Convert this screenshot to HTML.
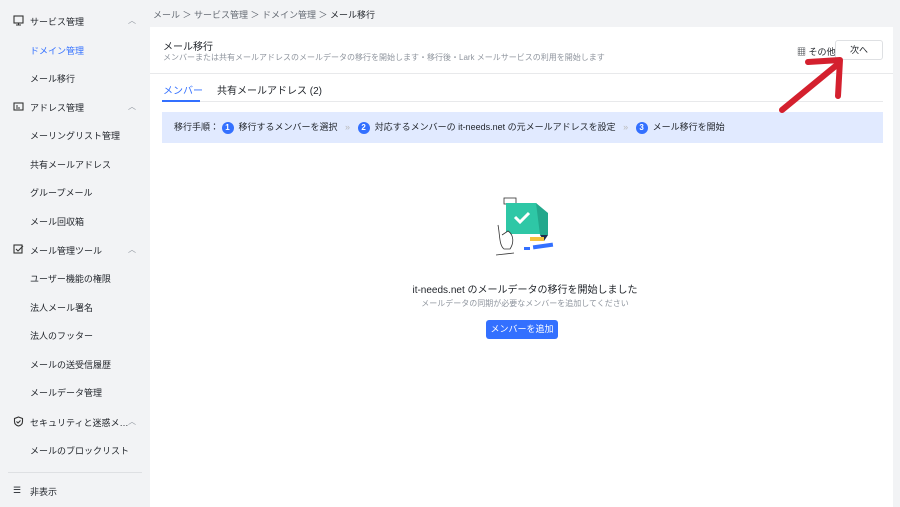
<!DOCTYPE html><html><head><meta charset="utf-8"><style>
body{margin:0;width:900px;height:507px;background:#f2f3f5;font-family:"Liberation Sans","Noto Sans CJK JP",sans-serif;position:relative;overflow:hidden;color:#1f2329}
.a{position:absolute;white-space:nowrap}
.s{font-size:9px;color:#1f2329}
.h{font-size:9px;color:#1f2329}
.car{font-size:8px;color:#8f959e}
</style></head><body>
<div class="a" style="left:0;top:0;width:150px;height:507px;background:#f2f3f5"></div>
<svg class="a" style="left:13px;top:15px" width="11" height="11" viewBox="0 0 11 11" fill="none" stroke="#333" stroke-width="1.1"><rect x="1" y="1" width="9" height="7"/><path d="M3 10h5M5.5 8v2"/></svg>
<div class="a h" style="left:30px;top:15px">サービス管理</div><div class="a car" style="left:128px;top:15px">︿</div>
<div class="a s" style="left:30px;top:44px;color:#3370ff">ドメイン管理</div>
<div class="a s" style="left:30px;top:72px">メール移行</div>
<svg class="a" style="left:13px;top:101px" width="11" height="11" viewBox="0 0 11 11" fill="none" stroke="#333" stroke-width="1.1"><rect x="1" y="2" width="9" height="7"/><path d="M3 5h2M3 7h4"/></svg>
<div class="a h" style="left:30px;top:101px">アドレス管理</div><div class="a car" style="left:128px;top:101px">︿</div>
<div class="a s" style="left:30px;top:129px">メーリングリスト管理</div>
<div class="a s" style="left:30px;top:158px">共有メールアドレス</div>
<div class="a s" style="left:30px;top:186px">グループメール</div>
<div class="a s" style="left:30px;top:215px">メール回収箱</div>
<svg class="a" style="left:13px;top:244px" width="11" height="11" viewBox="0 0 11 11" fill="none" stroke="#333" stroke-width="1.1"><rect x="1" y="1" width="8" height="8"/><path d="M3 5l2 2 5-5"/></svg>
<div class="a h" style="left:30px;top:244px">メール管理ツール</div><div class="a car" style="left:128px;top:244px">︿</div>
<div class="a s" style="left:30px;top:272px">ユーザー機能の権限</div>
<div class="a s" style="left:30px;top:301px">法人メール署名</div>
<div class="a s" style="left:30px;top:329px">法人のフッター</div>
<div class="a s" style="left:30px;top:358px">メールの送受信履歴</div>
<div class="a s" style="left:30px;top:386px">メールデータ管理</div>
<svg class="a" style="left:13px;top:416px" width="11" height="11" viewBox="0 0 11 11" fill="none" stroke="#333" stroke-width="1.1"><path d="M5.5 1l4 1.5v3c0 2.5-2 4-4 4.5-2-.5-4-2-4-4.5v-3z"/><path d="M3.5 5.5l1.5 1.5 2.5-2.5"/></svg>
<div class="a h" style="left:30px;top:416px">セキュリティと迷惑メ…</div><div class="a car" style="left:128px;top:416px">︿</div>
<div class="a s" style="left:30px;top:444px">メールのブロックリスト</div>
<div class="a" style="left:8px;top:472px;width:134px;height:1px;background:#dee0e3"></div>
<div class="a s" style="left:13px;top:485px">☰</div><div class="a s" style="left:30px;top:485px">非表示</div>

<div class="a" style="left:153px;top:8px;font-size:9px;color:#646a73">メール ＞ サービス管理 ＞ ドメイン管理 ＞ <span style="color:#1f2329">メール移行</span></div>
<div class="a" style="left:150px;top:27px;width:743px;height:480px;background:#fff"></div>
<div class="a" style="left:163px;top:38px;font-size:10px">メール移行</div>
<div class="a" style="left:163px;top:52px;font-size:8px;color:#8f959e">メンバーまたは共有メールアドレスのメールデータの移行を開始します・移行後・Lark メールサービスの利用を開始します</div>
<div class="a" style="left:797px;top:45px;font-size:9px;color:#1f2329">▦ その他</div>
<div class="a" style="left:835px;top:40px;width:46px;height:18px;border:1px solid #dee0e3;border-radius:3px;font-size:9px;text-align:center;line-height:18px;background:#fff">次へ</div>
<div class="a" style="left:150px;top:73px;width:743px;height:1px;background:#e8e9eb"></div>
<div class="a" style="left:163px;top:82px;font-size:10px;color:#3370ff">メンバー</div>
<div class="a" style="left:217px;top:82px;font-size:10px">共有メールアドレス (2)</div>
<div class="a" style="left:162px;top:101px;width:721px;height:1px;background:#e8e9eb"></div>
<div class="a" style="left:162px;top:100px;width:38px;height:2px;background:#3370ff"></div>
<div class="a" style="left:162px;top:112px;width:721px;height:31px;background:#e1eaff;font-size:9px;line-height:31px;color:#1f2329">
<span style="margin-left:12px">移行手順： <b style="display:inline-block;width:12px;height:12px;border-radius:6px;background:#3370ff;color:#fff;text-align:center;line-height:12px;font-size:8px">1</b>&nbsp; 移行するメンバーを選択 <span style="color:#bbb">&nbsp;&nbsp;»&nbsp;&nbsp;</span> <b style="display:inline-block;width:12px;height:12px;border-radius:6px;background:#3370ff;color:#fff;text-align:center;line-height:12px;font-size:8px">2</b>&nbsp; 対応するメンバーの it-needs.net の元メールアドレスを設定 <span style="color:#bbb">&nbsp;&nbsp;»&nbsp;&nbsp;</span> <b style="display:inline-block;width:12px;height:12px;border-radius:6px;background:#3370ff;color:#fff;text-align:center;line-height:12px;font-size:8px">3</b>&nbsp; メール移行を開始</span></div>
<svg class="a" style="left:490px;top:195px" width="70" height="70" viewBox="0 0 70 70">
<rect x="14" y="3" width="12" height="6" fill="#fff" stroke="#333" stroke-width="0.8"/>
<path d="M16 8h30l4 4v27H16z" fill="#2ec7a6"/><path d="M46 8l12 10v22l-8 0z" fill="#23a88c"/>
<path d="M50 40h8l-4 6z" fill="#1f2d4d"/>
<path d="M25 22l5 5 9-9" fill="none" stroke="#fff" stroke-width="3"/>
<path d="M8 30c2 10 1 20 6 24l6 0c4-6 4-14-2-18l-6 4" fill="#fff" stroke="#333" stroke-width="0.8"/>
<path d="M6 60l18-2" stroke="#333" stroke-width="0.8"/>
<rect x="40" y="42" width="14" height="4" fill="#f5c23c"/>
<rect x="34" y="52" width="6" height="3" fill="#3370ff"/><rect x="43" y="49" width="20" height="4" fill="#3370ff" transform="rotate(-8 53 51)"/>
</svg>
<div class="a" style="left:0;width:1050px;top:281px;text-align:center;font-size:10px">it-needs.net のメールデータの移行を開始しました</div>
<div class="a" style="left:0;width:1050px;top:298px;text-align:center;font-size:8px;color:#8f959e">メールデータの同期が必要なメンバーを追加してください</div>
<div class="a" style="left:486px;top:320px;width:72px;height:19px;background:#3370ff;border-radius:3px;color:#fff;font-size:9px;text-align:center;line-height:19px">メンバーを追加</div>
<svg class="a" style="left:770px;top:50px" width="90" height="70" viewBox="0 0 90 70"><path d="M12 60L68 14" stroke="#d4202e" stroke-width="6" stroke-linecap="round"/><path d="M38 12L70 10 68 46" fill="none" stroke="#d4202e" stroke-width="6" stroke-linecap="round" stroke-linejoin="round"/></svg>
</body></html>
